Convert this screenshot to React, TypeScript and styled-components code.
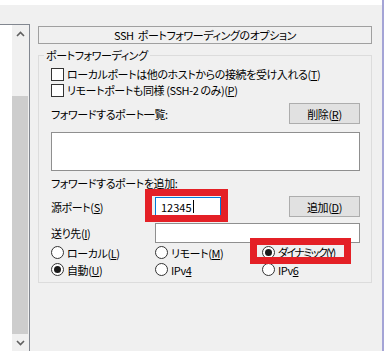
import React from 'react';
import styled, { createGlobalStyle } from 'styled-components';

const GlobalStyle = createGlobalStyle`
  html, body {
    margin: 0;
    padding: 0;
  }
  body {
    background: #f0f0f0;
    font-family: "Noto Sans CJK JP", "Liberation Sans", sans-serif;
    font-size: 11px;
    letter-spacing: -0.4px;
    color: #000;
  }
`;

const Window = styled.div`
  width: 384px;
  height: 351px;
  box-sizing: border-box;
  border-right: 2px solid #a4a4d6;
  display: flex;
  flex-direction: column;
  overflow: hidden;
  font-feature-settings: "palt";
`;

const TopStrip = styled.div`
  height: 24px;
  flex: none;
  box-sizing: border-box;
  border-top: 5px solid #ffffff;
`;

const Body = styled.div`
  flex: 1;
  display: flex;
  min-height: 0;
`;

const Tree = styled.div`
  width: 30px;
  flex: none;
  box-sizing: border-box;
  border-top: 1px solid #828790;
  border-right: 1px solid #828790;
  background: #ffffff;
  display: flex;
  justify-content: flex-end;
`;

const ScrollBar = styled.div`
  width: 17px;
  background: #f0f0f0;
  display: flex;
  flex-direction: column;
`;

const ArrowButton = styled.div`
  height: 17px;
  flex: none;
  display: flex;
  align-items: center;
  justify-content: center;
  padding-right: 1px;
`;

const Track = styled.div`
  flex: 1;
  display: flex;
  flex-direction: column;
  padding-top: 54px;
`;

const Thumb = styled.div`
  flex: 1;
  margin-right: 1px;
  background: #cdcdcd;
`;

const Content = styled.div`
  width: 334px;
  margin-left: 8px;
  padding-top: 2px;
`;

const Header = styled.div`
  height: 18px;
  box-sizing: border-box;
  border: 1px solid #a0a0a0;
  text-align: center;
  line-height: 16px;
  word-spacing: 2px;
`;

const Group = styled.fieldset`
  margin: 4px 0 0;
  padding: 0 11px 4px 12px;
  border: 1px solid #dcdcdc;
  min-width: 0;
`;

const Legend = styled.legend`
  padding: 0 2px;
  margin-left: -7px;
  line-height: 14px;
`;

const CheckRow = styled.div<{ $top?: number }>`
  display: flex;
  align-items: center;
  gap: 3px;
  height: 16px;
  margin-top: ${(p) => p.$top ?? 0}px;
`;

const CheckBox = styled.span`
  width: 13px;
  height: 13px;
  flex: none;
  box-sizing: border-box;
  border: 1px solid #333333;
  background: #ffffff;
`;

const Key = styled.span`
  text-decoration: underline;
  text-underline-offset: 1px;
`;

const SplitRow = styled.div<{ $top: number }>`
  display: flex;
  align-items: center;
  justify-content: space-between;
  height: 21px;
  margin-top: ${(p) => p.$top}px;
`;

const Button = styled.div`
  width: 71px;
  height: 21px;
  box-sizing: border-box;
  border: 1px solid #adadad;
  background: #e1e1e1;
  display: flex;
  align-items: center;
  justify-content: center;
`;

const ListBox = styled.div`
  height: 39px;
  margin-top: 8px;
  box-sizing: border-box;
  border: 1px solid #8f8f8f;
  background: #ffffff;
`;

const Caption = styled.div`
  margin-top: 5px;
  line-height: 14px;
`;

const FieldRow = styled.div<{ $top: number }>`
  display: flex;
  align-items: center;
  height: 21px;
  margin-top: ${(p) => p.$top}px;
`;

const FieldLabel = styled.div`
  width: 104px;
  flex: none;
`;

const Marked = styled.div`
  position: relative;
`;

const RedBox = styled.div<{ $l: number; $t: number; $w: number; $h: number }>`
  position: absolute;
  left: ${(p) => p.$l}px;
  top: ${(p) => p.$t}px;
  width: ${(p) => p.$w}px;
  height: ${(p) => p.$h}px;
  box-sizing: border-box;
  border: 7px solid #e42026;
  pointer-events: none;
`;

const TextBox = styled.div<{ $focused?: boolean; $grow?: boolean }>`
  height: 20px;
  width: ${(p) => (p.$grow ? 'auto' : '66px')};
  flex: ${(p) => (p.$grow ? 1 : 'none')};
  box-sizing: border-box;
  border: 1px solid ${(p) => (p.$focused ? '#0078d7' : '#8f8f8f')};
  background: #ffffff;
  padding-left: 5px;
  display: flex;
  align-items: center;
  letter-spacing: 0;
`;

const Caret = styled.span`
  width: 1px;
  height: 13px;
  background: #000;
  margin-left: 1px;
`;

const RadioGrid = styled.div`
  display: grid;
  grid-template-columns: 104px 107px 1fr;
  grid-auto-rows: 17px;
  margin-top: 1px;
`;

const RadioItem = styled.div`
  display: flex;
  align-items: center;
  gap: 3px;
  justify-self: start;
`;

const RadioText = styled.span<{ $tight?: boolean }>`
  letter-spacing: ${(p) => (p.$tight ? '-1.6px' : 'inherit')};
  white-space: nowrap;
`;

const RadioCircle = styled.span<{ $on?: boolean }>`
  width: 13px;
  height: 13px;
  flex: none;
  box-sizing: border-box;
  border: 1px solid #333333;
  border-radius: 50%;
  background: #ffffff;
  display: flex;
  align-items: center;
  justify-content: center;
  &::after {
    content: '';
    width: 7px;
    height: 7px;
    border-radius: 50%;
    background: ${(p) => (p.$on ? '#1a1a1a' : 'transparent')};
  }
`;

const Chevron = ({ up }: { up?: boolean }) => (
  <svg width="9" height="6" viewBox="0 0 9 6">
    <polyline
      points={up ? '1,5 4.5,1.5 8,5' : '1,1 4.5,4.5 8,1'}
      fill="none"
      stroke="#606060"
      strokeWidth="1.6"
    />
  </svg>
);

const Radio = ({
  on,
  tight,
  children,
}: {
  on?: boolean;
  tight?: boolean;
  children: React.ReactNode;
}) => (
  <RadioItem>
    <RadioCircle $on={on} />
    <RadioText $tight={tight}>{children}</RadioText>
  </RadioItem>
);

export default function App() {
  return (
    <>
      <GlobalStyle />
      <Window>
        <TopStrip />
        <Body>
          <Tree>
            <ScrollBar>
              <ArrowButton>
                <Chevron up />
              </ArrowButton>
              <Track>
                <Thumb />
              </Track>
              <ArrowButton>
                <Chevron />
              </ArrowButton>
            </ScrollBar>
          </Tree>
          <Content>
            <Header>SSH ポートフォワーディングのオプション</Header>
            <Group>
              <Legend>ポートフォワーディング</Legend>
              <CheckRow $top={4}>
                <CheckBox />
                <span>
                  ローカルポートは他のホストからの接続を受け入れる(<Key>T</Key>)
                </span>
              </CheckRow>
              <CheckRow>
                <CheckBox />
                <span>
                  リモートポートも同様 (SSH-2 のみ)(<Key>P</Key>)
                </span>
              </CheckRow>
              <SplitRow $top={5}>
                <span>フォワードするポート一覧:</span>
                <Button>
                  削除(<Key>R</Key>)
                </Button>
              </SplitRow>
              <ListBox />
              <Caption>フォワードするポートを追加:</Caption>
              <FieldRow $top={6}>
                <FieldLabel>
                  源ポート(<Key>S</Key>)
                </FieldLabel>
                <Marked>
                  <TextBox $focused>
                    12345
                    <Caret />
                  </TextBox>
                  <RedBox $l={-10} $t={-8} $w={83} $h={33} />
                </Marked>
                <Button style={{ marginLeft: 'auto' }}>
                  追加(<Key>D</Key>)
                </Button>
              </FieldRow>
              <FieldRow $top={5}>
                <FieldLabel>
                  送り先(<Key>I</Key>)
                </FieldLabel>
                <TextBox $grow />
              </FieldRow>
              <RadioGrid>
                <Radio>
                  ローカル(<Key>L</Key>)
                </Radio>
                <Radio>
                  リモート(<Key>M</Key>)
                </Radio>
                <Marked>
                  <Radio on tight>
                    ダイナミック(<Key>Y</Key>)
                  </Radio>
                  <RedBox $l={-12} $t={-6} $w={101} $h={26} />
                </Marked>
                <Radio on>
                  自動(<Key>U</Key>)
                </Radio>
                <Radio>
                  IPv<Key>4</Key>
                </Radio>
                <Radio>
                  IPv<Key>6</Key>
                </Radio>
              </RadioGrid>
            </Group>
          </Content>
        </Body>
      </Window>
    </>
  );
}
